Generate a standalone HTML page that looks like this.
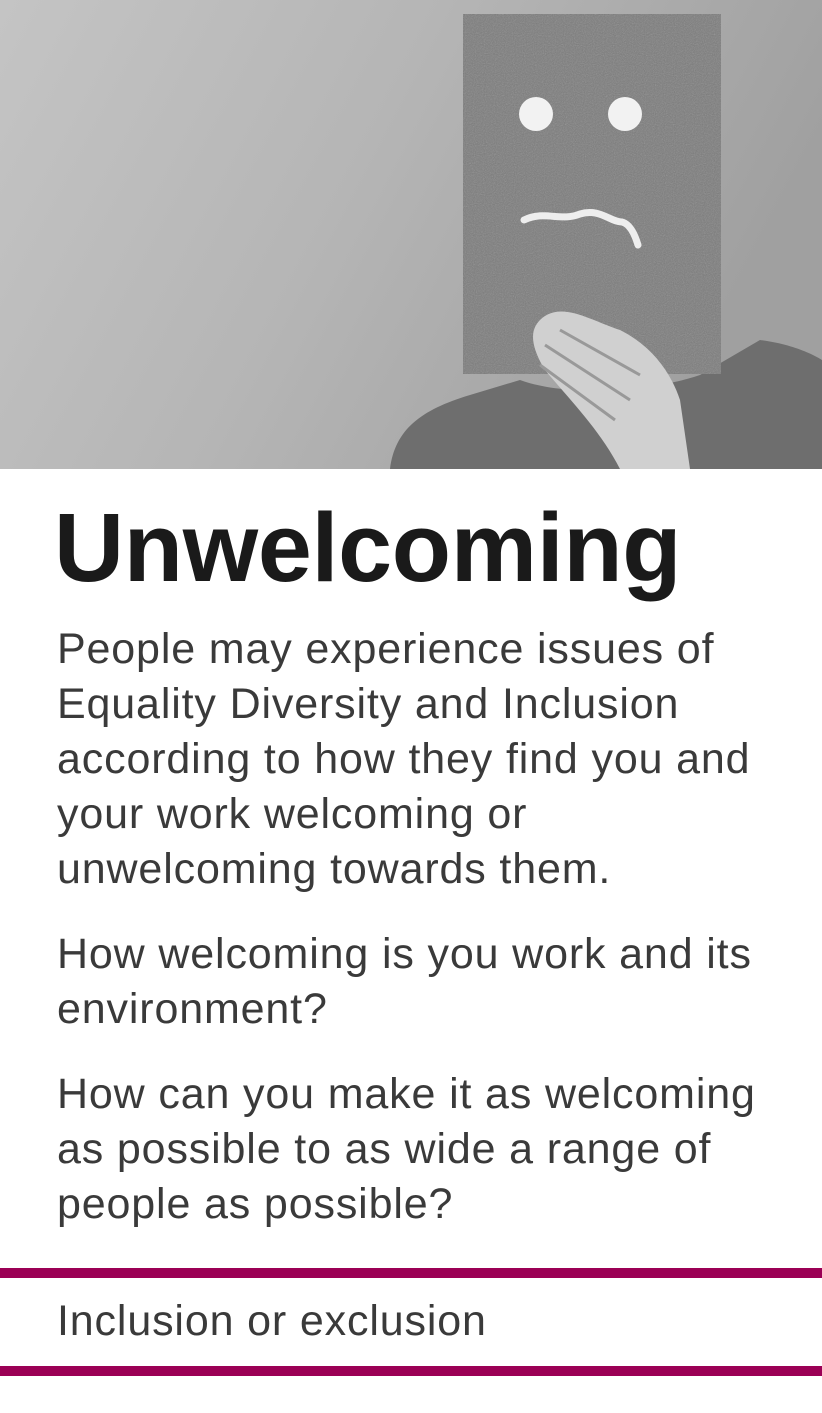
<!DOCTYPE html>
<html><head><meta charset="utf-8"><style>
html,body{margin:0;padding:0;background:#fff;}
body{width:822px;height:1413px;position:relative;overflow:hidden;font-family:"Liberation Sans",sans-serif;}
.t{position:absolute;left:57px;white-space:nowrap;color:#2a2a2a;}
h1{position:absolute;left:54px;top:488px;margin:0;font-size:97px;font-weight:bold;color:#1a1a1a;letter-spacing:-0.3px;line-height:120px;}
.p{font-size:43px;line-height:55px;letter-spacing:0.85px;font-weight:normal;color:#3a3a3a;}
.bar{position:absolute;left:0;width:822px;height:10px;background:#9b0055;}
</style></head><body>
<svg width="822" height="469" style="position:absolute;left:0;top:0" viewBox="0 0 822 469">
<defs>
<linearGradient id="bg" x1="0" y1="0" x2="1" y2="0.3"><stop offset="0" stop-color="#c4c4c4"/><stop offset="0.5" stop-color="#b5b5b5"/><stop offset="1" stop-color="#a0a0a0"/></linearGradient>
<filter id="n"><feTurbulence type="fractalNoise" baseFrequency="0.9" numOctaves="2"/><feColorMatrix type="saturate" values="0"/><feComponentTransfer><feFuncA type="table" tableValues="0 0.35"/></feComponentTransfer><feComposite in2="SourceGraphic" operator="in"/></filter>
</defs>
<rect width="822" height="469" fill="url(#bg)"/>
<path d="M390 469 C395 430 420 410 470 395 L520 380 C560 395 640 395 700 375 L760 340 C800 345 822 360 822 360 L822 469 Z" fill="#6e6e6e"/>
<rect x="463" y="14" width="258" height="360" fill="#7b7b7b"/>
<rect x="463" y="14" width="258" height="360" fill="#000" filter="url(#n)"/>
<circle cx="536" cy="114" r="17" fill="#f2f2f2"/>
<circle cx="625" cy="114" r="17" fill="#f2f2f2"/>
<path d="M524 220 C545 210 560 222 580 214 C600 208 610 222 622 222 C630 224 635 235 638 245" stroke="#eee" stroke-width="7" fill="none" stroke-linecap="round"/>
<path d="M540 320 C560 300 590 320 620 330 C650 345 670 370 680 400 L690 469 L620 469 C600 430 570 400 545 370 C530 345 530 330 540 320 Z" fill="#d0d0d0"/>
<path d="M560 330 L640 375 M545 345 L630 400 M540 365 L615 420" stroke="#999" stroke-width="3" fill="none"/>
</svg>
<h1>Unwelcoming</h1>
<div class="t p" style="top:622px">People may experience issues of<br>Equality Diversity and Inclusion<br>according to how they find you and<br>your work welcoming or<br>unwelcoming towards them.</div>
<div class="t p" style="top:927px">How welcoming is you work and its<br>environment?</div>
<div class="t p" style="top:1067px">How can you make it as welcoming<br>as possible to as wide a range of<br>people as possible?</div>
<div class="bar" style="top:1268px"></div>
<div class="t p" style="top:1294px">Inclusion or exclusion</div>
<div class="bar" style="top:1366px"></div>
</body></html>
